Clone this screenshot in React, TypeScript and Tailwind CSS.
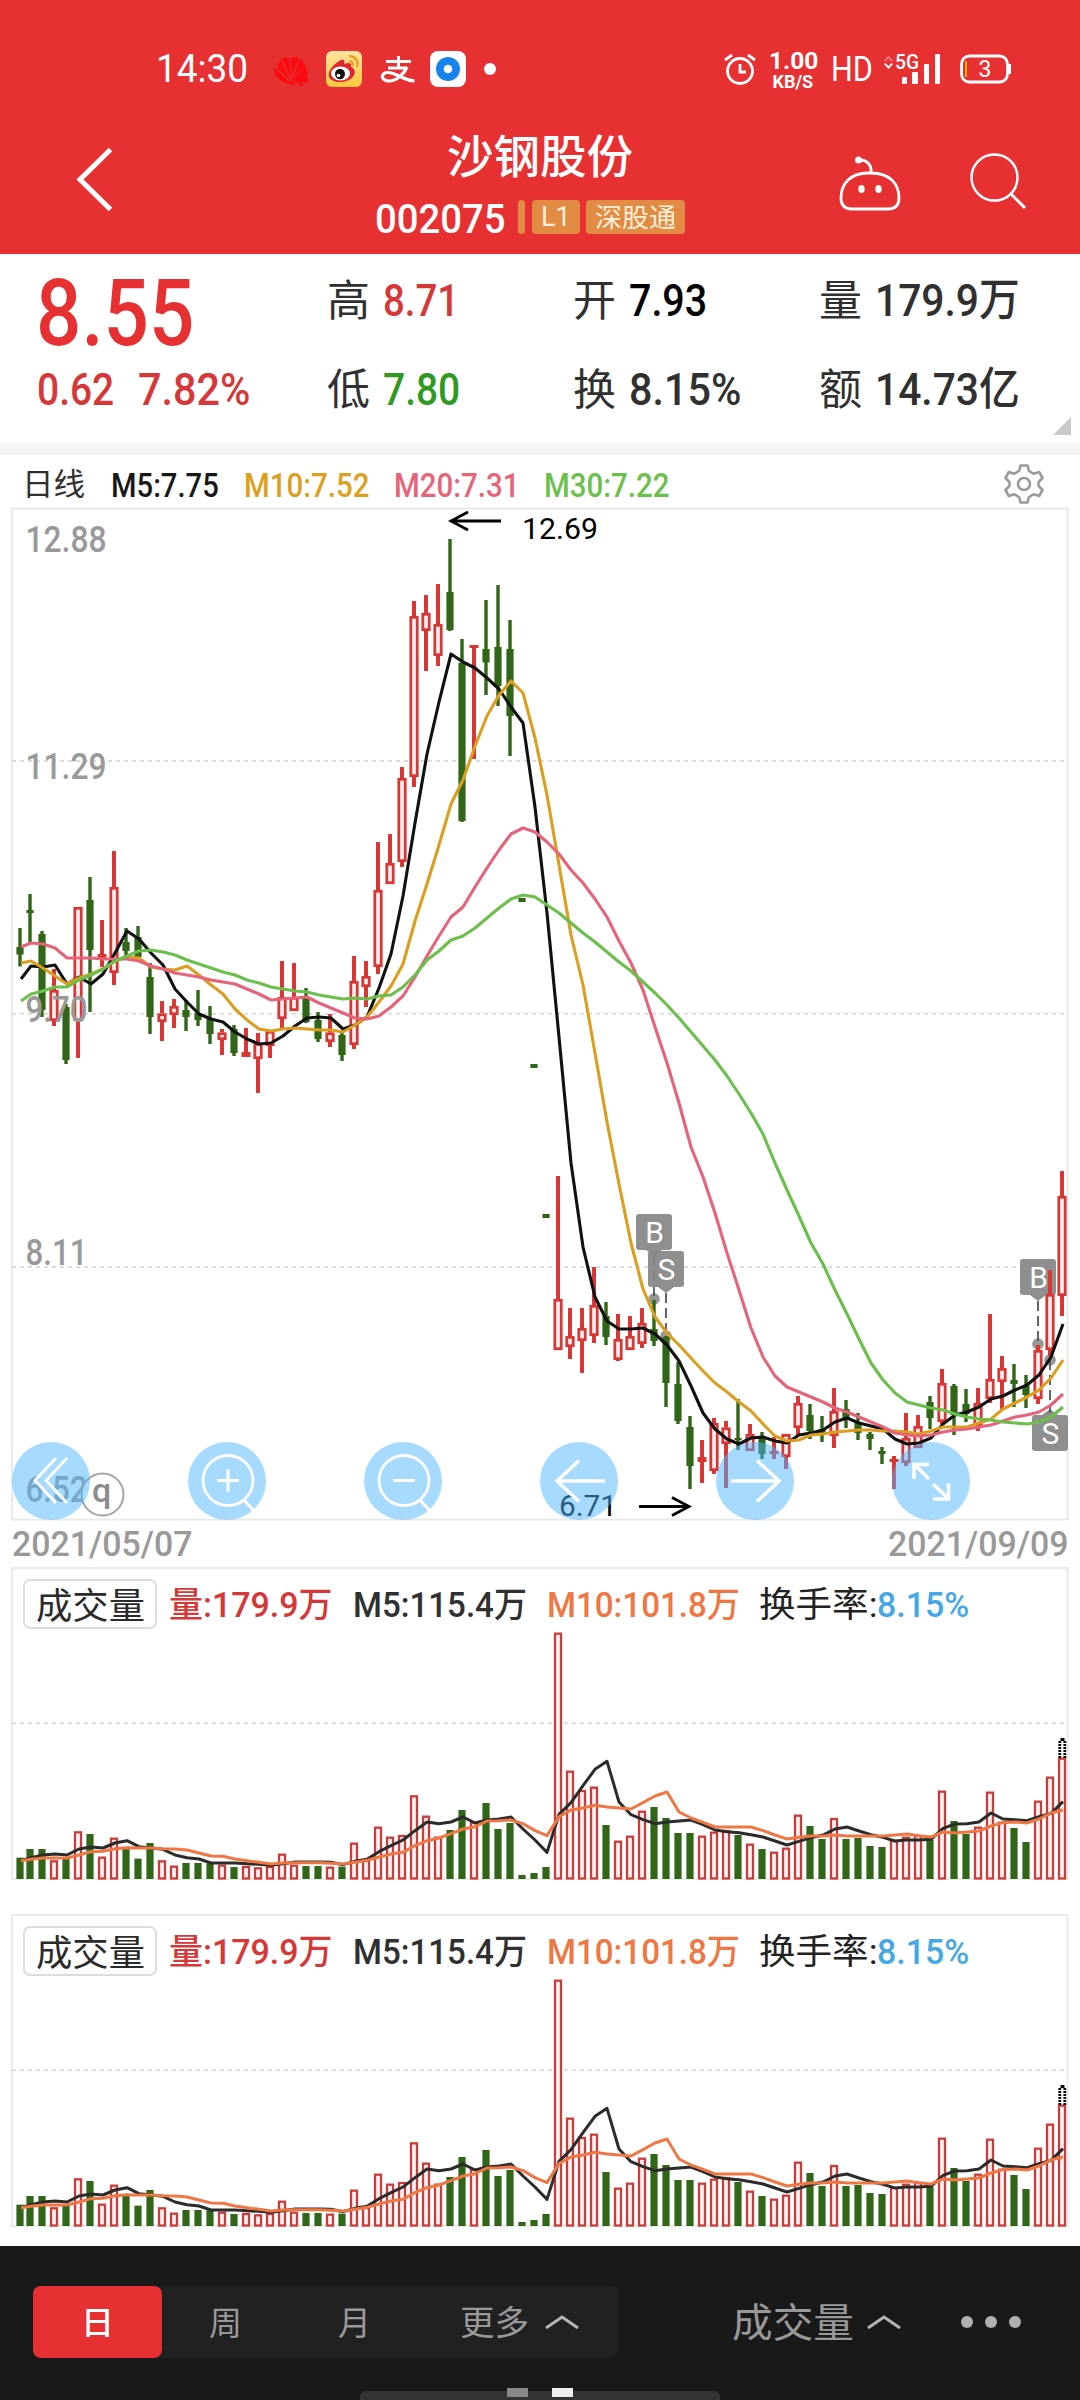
import { useLayoutEffect, useRef, useState } from "react";
import type { ReactNode } from "react";

/** A single line of text condensed or widened to fill exactly `w` pixels. */
function Fit({ w, className = "", children }: { w: number; className?: string; children: ReactNode }) {
  const ref = useRef<HTMLSpanElement>(null);
  const [scale, setScale] = useState(1);
  useLayoutEffect(() => {
    if (ref.current) setScale(w / ref.current.offsetWidth);
  }, [w]);
  return (
    <div className={`shrink-0 whitespace-nowrap leading-none ${className}`} style={{ width: w }}>
      <span ref={ref} className="inline-block origin-left leading-none" style={{ transform: `scaleX(${scale})` }}>
        {children}
      </span>
    </div>
  );
}

type Bar = [number, number, number, number, number]; // up?, high, body top, body bottom, low

const CANDLES: Bar[] = [
  [0, 928, 947, 954.5, 966.5], [0, 894, 910, 913, 942], [0, 931, 934, 1010, 1017], [1, 969, 990, 1021, 1026],
  [0, 1004, 1007, 1060, 1064], [1, 907, 907, 1021, 1058], [0, 877, 900, 950, 1012], [1, 920, 954, 959, 967],
  [1, 851, 887, 973, 985], [0, 928, 942, 951, 957], [0, 926, 937, 957, 958], [0, 963, 977, 1017, 1034],
  [1, 1001, 1013.5, 1022, 1041], [1, 999, 1006, 1015, 1028], [0, 1000, 1010, 1017, 1031], [0, 990, 1013, 1020, 1026],
  [0, 1006, 1019, 1034, 1044], [1, 1029, 1032.5, 1040, 1055], [0, 1025, 1029, 1053, 1056], [1, 1028, 1052, 1057, 1057],
  [1, 1033, 1043, 1059, 1093], [1, 1030, 1031, 1046, 1058], [1, 961, 997, 1019, 1028], [1, 963, 997, 1011, 1011],
  [0, 988, 997, 1022, 1023], [0, 1012, 1020, 1039, 1042], [1, 1014, 1032.5, 1042, 1047], [0, 1033, 1035, 1055, 1061],
  [1, 956, 981, 1045, 1049], [1, 961, 976, 987, 1007], [1, 842, 890, 967, 974], [1, 834, 863, 884, 884],
  [1, 767, 778, 862, 867], [1, 601, 616, 777, 787], [1, 595, 613, 631, 671], [1, 584, 624, 656, 666],
  [0, 539, 592, 630, 631], [0, 639, 663, 821, 822], [1, 645, 645, 648, 759], [0, 600, 649, 662.5, 695],
  [0, 585, 647, 686, 706], [0, 620, 649, 716, 756], [0, 898, 898, 902, 902], [0, 1064, 1064, 1068, 1068],
  [0, 1214, 1214, 1218, 1218], [1, 1176, 1299, 1350, 1350], [1, 1308, 1336, 1347, 1359], [1, 1308, 1328, 1341, 1373],
  [1, 1267, 1305, 1336, 1343], [0, 1302, 1316, 1337, 1345], [1, 1314, 1339, 1360, 1361], [1, 1316, 1336, 1350, 1350],
  [1, 1308, 1323, 1344, 1348], [0, 1300, 1329, 1341, 1346], [0, 1336, 1337, 1383, 1407], [0, 1362, 1384, 1421, 1424],
  [0, 1416, 1427, 1466, 1489], [1, 1440, 1457, 1462, 1483], [1, 1418, 1423, 1471, 1474], [1, 1421, 1427.5, 1444, 1488],
  [0, 1399, 1438, 1440, 1450], [1, 1424, 1434, 1451, 1451], [0, 1432, 1436, 1454, 1459], [1, 1437, 1451, 1454, 1459],
  [1, 1434, 1434, 1457, 1469], [1, 1396, 1403, 1428, 1435], [0, 1404, 1415, 1431, 1439], [0, 1416, 1429, 1433, 1442],
  [1, 1388, 1411, 1436, 1448], [0, 1400, 1409, 1418, 1428], [0, 1413, 1423, 1433, 1440], [0, 1432, 1434, 1439, 1450],
  [0, 1447, 1451, 1454, 1464], [1, 1456, 1459, 1462, 1489], [1, 1413, 1438, 1463, 1466], [1, 1415, 1426, 1448, 1448],
  [0, 1396, 1402, 1418, 1429], [1, 1369, 1383, 1422, 1424], [0, 1384, 1386, 1415, 1435], [0, 1389, 1404, 1414, 1422],
  [1, 1388, 1403, 1425, 1431], [1, 1314, 1379, 1399, 1403], [1, 1356, 1368, 1382, 1409], [0, 1364, 1380, 1384, 1407],
  [0, 1375, 1386, 1395, 1408], [1, 1345, 1350, 1399, 1404], [1, 1270, 1294, 1350, 1356], [1, 1171, 1196, 1296, 1316],
];

const MA5 = [979, 966, 967, 965, 984, 977, 984, 974, 953, 931, 939, 953, 965, 989, 1002, 1014, 1019, 1022, 1032, 1039, 1044, 1043, 1036, 1026, 1018, 1017, 1018, 1029, 1025, 1017, 988, 954, 896, 823, 754, 702, 654, 662, 668, 678, 689, 707, 723, 807, 913, 1037, 1163, 1247, 1297, 1321, 1329, 1329, 1328, 1334, 1345, 1361, 1386, 1413, 1429, 1439, 1444, 1438, 1437, 1441, 1443, 1435, 1433, 1430, 1422, 1418, 1423, 1426, 1429, 1439, 1444, 1443, 1438, 1424, 1415, 1412, 1407, 1399, 1396, 1390, 1385, 1375, 1357, 1324];
const MA10 = [963, 961, 968, 976, 984, 978, 974, 969, 961, 957, 958, 967, 969, 970, 966, 975, 985, 994, 1009, 1020, 1029, 1031, 1029, 1028, 1029, 1030, 1030, 1032, 1025, 1017, 1002, 986, 964, 921, 884, 845, 804, 780, 746, 716, 695, 681, 693, 738, 795, 865, 935, 985, 1053, 1122, 1184, 1243, 1289, 1317, 1333, 1345, 1358, 1371, 1383, 1392, 1402, 1411, 1424, 1436, 1441, 1440, 1435, 1434, 1432, 1431, 1430, 1430, 1431, 1431, 1432, 1434, 1431, 1427, 1427, 1427, 1423, 1419, 1409, 1403, 1397, 1390, 1378, 1360];
const MA20 = [947, 943, 944, 948, 958, 958, 958, 959, 959, 959, 961, 966, 969, 973, 975, 977, 980, 982, 984, 989, 994, 1000, 999, 998, 997, 1003, 1008, 1013, 1018, 1019, 1016, 1007, 996, 977, 956, 936, 917, 907, 887, 868, 850, 834, 828, 832, 842, 854, 870, 883, 899, 917, 941, 963, 990, 1027, 1063, 1103, 1147, 1177, 1213, 1253, 1290, 1328, 1357, 1376, 1387, 1392, 1397, 1402, 1408, 1412, 1417, 1422, 1427, 1433, 1435, 1436, 1435, 1432, 1430, 1429, 1427, 1425, 1421, 1417, 1415, 1412, 1405, 1394];
const MA30 = [1001, 994, 991, 987, 987, 980, 975, 969, 961, 956, 951, 950, 952, 955, 960, 964, 968, 972, 975, 980, 983, 987, 989, 991, 992, 995, 997, 999, 998, 999, 996, 995, 987, 975, 960, 951, 940, 936, 928, 918, 908, 899, 895, 897, 905, 913, 923, 933, 942, 952, 962, 971, 982, 993, 1005, 1018, 1032, 1046, 1060, 1076, 1094, 1113, 1134, 1163, 1190, 1216, 1243, 1264, 1290, 1314, 1339, 1363, 1380, 1393, 1402, 1405, 1408, 1410, 1414, 1417, 1419, 1420, 1422, 1423, 1424, 1422, 1417, 1407];

// Volume series, in thirds of a pixel below the panel's reference line.
const VOLUME = [713, 687, 687, 721, 712, 634, 642, 710, 653, 685, 716, 669, 721, 737, 729, 729, 730, 734, 741, 738, 742, 738, 701, 734, 738, 738, 740, 740, 668, 720, 620, 650, 645, 526, 587, 650, 630, 570, 605, 549, 627, 609, 765, 759, 741, 38, 452, 510, 500, 615, 662, 647, 572, 561, 594, 639, 639, 647, 635, 630, 645, 671, 687, 695, 683, 584, 618, 657, 594, 657, 654, 678, 681, 660, 650, 645, 660, 512, 603, 642, 620, 515, 605, 624, 666, 542, 470, 413];
const VOL5 = [722, 713, 705, 702, 705, 687, 681, 684, 669, 662, 680, 684, 688, 705, 713, 717, 729, 729, 729, 731, 733, 736, 731, 726, 726, 726, 727, 734, 724, 718, 695, 677, 660, 632, 606, 611, 606, 591, 609, 600, 597, 591, 627, 660, 697, 583, 548, 497, 448, 424, 546, 584, 599, 611, 606, 603, 600, 614, 630, 635, 638, 644, 651, 663, 675, 664, 653, 645, 627, 621, 633, 644, 652, 663, 660, 660, 658, 625, 612, 611, 606, 579, 597, 599, 602, 590, 580, 545];
const VOL10 = [722, 718, 714, 714, 714, 705, 695, 694, 686, 683, 684, 684, 686, 687, 690, 699, 708, 709, 717, 722, 727, 732, 729, 728, 728, 728, 730, 732, 727, 721, 711, 702, 697, 677, 662, 654, 641, 627, 620, 603, 602, 600, 611, 632, 647, 590, 570, 564, 556, 561, 564, 567, 548, 528, 516, 576, 594, 607, 621, 621, 621, 621, 632, 645, 657, 652, 648, 648, 645, 648, 648, 648, 648, 645, 642, 647, 651, 636, 639, 636, 633, 618, 608, 606, 609, 597, 579, 570];

const RED = "#d93636";
const GREEN = "#316518";

const barX = (i: number) => (i === 0 ? 20 : 18 + 12 * i);
const line = (ys: number[], map: (y: number) => number = (y) => y) =>
  ys.map((y, i) => `${barX(i) + 1},${map(y)}`).join(" ");

function Candle({ i, bar }: { i: number; bar: Bar }) {
  const [up, high, top, bottom, low] = bar;
  const x = barX(i);
  if (!up) {
    return (
      <g fill={GREEN}>
        <rect x={x - 1.7} y={high} width={3.4} height={Math.max(low - high, 1)} />
        <rect x={x - 3.6} y={top} width={7.2} height={bottom - top} />
      </g>
    );
  }
  const hollow = bottom - top > 6;
  return (
    <g>
      <rect x={x - 2} y={high} width={4} height={top - high} fill={RED} />
      <rect x={x - 2} y={bottom} width={4} height={low - bottom} fill={RED} />
      {hollow ? (
        <rect x={x - 3.2} y={top + 1.3} width={6.4} height={bottom - top - 2.6} fill="#fff3f3" stroke={RED} strokeWidth={2.8} />
      ) : (
        <rect x={x - 4.5} y={top} width={9} height={bottom - top} fill={RED} />
      )}
    </g>
  );
}

function Marker({ x, y, label, tip, dot }: { x: number; y: number; label: string; tip: "up" | "down"; dot: number }) {
  const down = tip === "down";
  return (
    <g>
      <circle cx={x} cy={dot} r={5.8} fill="#979797" />
      <rect x={x - 18} y={y} width={36} height={36} rx={3} fill="#868686" fillOpacity={0.92} />
      <path d={down ? `M${x - 8} ${y + 36}h16l-8 6z` : `M${x - 8} ${y}h16l-8 -6z`} fill="#868686" fillOpacity={0.92} />
      <path d={down ? `M${x} ${y + 42}V${dot}` : `M${x} ${dot}V${y - 2}`} stroke="#555" strokeWidth={1.8} strokeDasharray="10 5" />
      <text x={x + 0.5} y={y + 28.5} textAnchor="middle" fontSize={30} fill="#fff">
        {label}
      </text>
    </g>
  );
}

const AXIS: [string, number, number][] = [
  ["12.88", 551.5, 81],
  ["11.29", 778.5, 81],
  ["9.70", 1022, 62],
  ["8.11", 1265, 62],
  ["6.52", 1502, 62],
];

function PriceChart() {
  return (
    <svg viewBox="11 507 1058 1014" className="block h-[1014px] w-[1058px]" fontFamily="Roboto, sans-serif">
      <rect x={12} y={508.5} width={1055.5} height={1011} fill="#fff" stroke="#eaeaea" strokeWidth={2} />
      {[761, 1013.7, 1267].map((y) => (
        <path key={y} d={`M12 ${y}H1067`} stroke="#dcdcdc" strokeWidth={2} strokeDasharray="4 4" />
      ))}
      <Marker x={654} y={1214} label="B" tip="down" dot={1299} />
      <Marker x={666} y={1251} label="S" tip="down" dot={1336} />
      <Marker x={1038} y={1259} label="B" tip="down" dot={1344} />
      <Marker x={1050} y={1415} label="S" tip="up" dot={1360} />
      {CANDLES.map((bar, i) => (
        <Candle key={i} i={i} bar={bar} />
      ))}
      <g fill="none" strokeWidth={3.1} strokeLinejoin="round">
        <polyline points={line(MA5)} stroke="#111" />
        <polyline points={line(MA10)} stroke="#dc9e20" />
        <polyline points={line(MA20)} stroke="#e5647a" />
        <polyline points={line(MA30)} stroke="#6bbf4b" />
      </g>
      <g fill="#999" fontSize={36} fontWeight={500}>
        {AXIS.map(([t, y, w]) => (
          <text key={t} x={25.5} y={y} textLength={w} lengthAdjust="spacingAndGlyphs">
            {t}
          </text>
        ))}
      </g>
      <g fill="none" stroke="#000" strokeWidth={2.8}>
        <path d="M501 521H451M468 512L451 521L468 530" />
        <path d="M639 1506.5H689M672 1497.5L689 1506.5L672 1515.5" />
      </g>
      <text x={522} y={539} fontSize={30} textLength={76} lengthAdjust="spacingAndGlyphs">12.69</text>
      <text x={559} y={1515.5} fontSize={30} textLength={58} lengthAdjust="spacingAndGlyphs">6.71</text>
      <circle cx={102.5} cy={1494.5} r={21} fill="#fff" stroke="#a5a5a5" strokeWidth={2} />
      <text x={101.5} y={1502} textAnchor="middle" fontSize={34} fontWeight={500} fill="#8c8c8c">q</text>
      <g fill="#4db5ff" fillOpacity={0.5}>
        {[51, 227, 403, 579, 755, 931].map((x) => (
          <circle key={x} cx={x} cy={1481} r={39} />
        ))}
      </g>
      <g fill="none" stroke="#fff" strokeWidth={3.5}>
        <path d="M56 1458L35 1480.5L56 1503M67 1458L46 1480.5L67 1503" strokeWidth={2.8} />
        <circle cx={228} cy={1480.5} r={25} strokeWidth={2.8} />
        <path d="M244 1500L254 1511M217 1480.5H239M228 1469.5V1491.5" strokeWidth={3} />
        <circle cx={404} cy={1480.5} r={25} strokeWidth={2.8} />
        <path d="M420 1500L430 1511M393 1480.5H415" strokeWidth={3} />
        <path d="M605 1481H557M579 1460.5L557 1481L579 1501.5" />
        <path d="M731 1481H779M757 1460.5L779 1481L757 1501.5" />
        <path d="M929 1479L914 1464M929 1464.5H914V1479M933 1484L949 1499M933 1499H948.5V1483.5" />
      </g>
    </svg>
  );
}

function VolumePanel() {
  const base = 311;
  const toY = (v: number) => base - (777 - v) / 3;
  return (
    <section className="relative mx-[11px] h-[313px]">
      <svg viewBox="11 -1 1058 313" className="block h-[313px] w-[1058px]">
        <rect x={12} y={0} width={1055.5} height={base} fill="#fff" stroke="#eaeaea" strokeWidth={2} />
        <path d="M12 155.3H1067" stroke="#dcdcdc" strokeWidth={2} strokeDasharray="4 4" />
        {VOLUME.map((v, i) =>
          CANDLES[i][0] ? (
            <rect key={i} x={barX(i) - 3} y={toY(v) + 1} width={6} height={base - toY(v) - 1.5} fill="#fff3f3" stroke="#c93c3c" strokeWidth={2.3} />
          ) : (
            <rect key={i} x={barX(i) - 3.6} y={toY(v)} width={7.2} height={base - toY(v)} fill={GREEN} />
          ),
        )}
        <path d="M1059.800 190V173M1064.800 190V173" fill="none" stroke="#000" strokeWidth={2.800} strokeDasharray="2 1" />
        <path d="M1060.500 171.500H1064.500" stroke="#000" strokeWidth={3} />
        <g fill="none" strokeWidth={3} strokeLinejoin="round">
          <polyline points={line(VOL5, toY)} stroke="#2b2b2b" />
          <polyline points={line(VOL10, toY)} stroke="#ee7744" />
        </g>
      </svg>
      <div className="absolute left-3 top-3 flex h-[50px] items-start text-[35px] font-medium">
        <div className="flex h-[50px] w-[134px] items-start rounded-[7px] border-2 border-[#dddddd] bg-white pl-[11px] pt-2 font-normal text-[#2a2a2a]">
          <Fit w={109} className="text-[36px]">成交量</Fit>
        </div>
        <Fit w={164} className="ml-[12px] mt-[9px] text-[#d43838]">量:179.9万</Fit>
        <Fit w={174} className="ml-[20px] mt-[9px] text-[#303030]">M5:115.4万</Fit>
        <Fit w={193} className="ml-[20px] mt-[9px] text-[#ee7744]">M10:101.8万</Fit>
        <Fit w={118} className="ml-[19px] mt-[9px] font-normal text-[#222222]">换手率:</Fit>
        <Fit w={92} className="mt-[9px] text-[#45a8e5]">8.15%</Fit>
      </div>
    </section>
  );
}

function StatusBar() {
  return (
    <div className="flex h-[90px] items-start pl-[156px] pt-[50px]">
      <Fit w={92} className="text-[39px]">14:30</Fit>
      <svg viewBox="0 0 36 36" className="ml-[25px] mt-[4px] size-9" fill="#fb0a12">
        <path d="M16 30C8 29 1 22 1 14l4 1C5 8 8 4 13 3l4 2 4-2c5 0 9 3 11 9l2 4c1 3 0 6-1 9-2-4-5-7-6-10-2 4-7 7-7 12 0 2 2 3 4 2l-2 2z" />
        <path d="M17 28L4 15M18 27L9 6M19 25L17 5M20 22L26 5" stroke="#e73031" strokeWidth={1.6} />
        <path d="M28 15c-2 5-8 8-7 12 1 2 4 2 6 1l-1 4h4l-1-4c2 1 5 1 6-1 1-4-5-7-7-12z" />
      </svg>
      <svg viewBox="0 0 36 36" className="ml-[17px] mt-px h-9 w-9">
        <defs>
          <linearGradient id="sun" x1="0" y1="0" x2="0" y2="1">
            <stop offset="0" stopColor="#ffe3a0" />
            <stop offset="1" stopColor="#ffc93c" />
          </linearGradient>
        </defs>
        <rect width={36} height={36} rx={6} fill="url(#sun)" />
        <path d="M15 9c-8 4-14 12-12 17 3 7 21 7 25-2 2-4 0-7-3-8 1-4-2-5-7-3 1-3 0-5-3-4z" fill="#e3232b" />
        <ellipse cx={14.500} cy={22.500} rx={9.500} ry={7} fill="#fff" />
        <ellipse cx={14} cy={23} rx={5} ry={5.300} fill="#111" />
        <circle cx={12.500} cy={24.500} r={1.800} fill="#fff" />
        <path d="M23 5c6 0 10 5 8 11M23 10c3 0 4 2 4 5" fill="none" stroke="#ee9e25" strokeWidth={2.300} />
      </svg>
      <svg viewBox="0 0 36 30" className="ml-[18px] mt-[5px] h-[30px] w-9" fill="none" stroke="#fff">
        <path d="M6 6.500H31M18.500 1V12M8 13H27" strokeWidth={3} />
        <path d="M27 12C24 19 17 26 9 26C3 26 1 22 3.500 19C7 15.500 14 18.500 20 21.500C25 24 29 25.500 34.500 26" strokeWidth={3.200} />
      </svg>
      <svg viewBox="0 0 36 36" className="ml-[14px] mt-px h-9 w-9">
        <rect width={36} height={36} rx={8} fill="#fff" />
        <circle cx={18} cy={18} r={12} fill="#1684ec" />
        <circle cx={18} cy={18} r={4.300} fill="#fff" />
      </svg>
      <div className="ml-[18px] mt-[13px] size-3 rounded-full bg-white" />
      <svg viewBox="0 0 34 36" className="ml-[227px] mt-[2px] h-9 w-[34px]" fill="none" stroke="#fff" strokeWidth={2.800}>
        <circle cx={17} cy={19} r={12.500} />
        <path d="M17 12v8h6M2 8l7-5M32 8l-7-5" />
      </svg>
      <div className="ml-[12px] flex w-[48px] flex-col items-center">
        <Fit w={49} className="text-[23px] font-bold">1.00</Fit>
        <Fit w={41} className="text-[18px] font-bold">KB/S</Fit>
      </div>
      <Fit w={42} className="ml-[14px] mt-[2px] text-[35px]">HD</Fit>
      <svg viewBox="0 0 60 36" className="ml-[10px] mt-px h-9 w-[60px]" fill="#fff">
        <path d="M1 9.500l4.500-5 4.500 5-1.500 1-3-3-3 3z" opacity={0.35} />
        <path d="M1 13l4.500 5 4.500-5-1.500-1-3 3-3-3z" />
        <text x={12} y={17.500} fontSize={20} fontWeight={500} textLength={24} lengthAdjust="spacingAndGlyphs" fontFamily="Roboto, sans-serif">5G</text>
        <rect x={19} y={26} width={5} height={7} rx={1} />
        <rect x={29} y={21} width={6} height={12} rx={1} />
        <rect x={41} y={13} width={5} height={20} rx={1} />
        <rect x={52} y={3} width={5} height={30} rx={1} />
      </svg>
      <svg viewBox="0 0 52 32" className="ml-[17px] mt-[3px] h-8 w-[52px]" fill="none">
        <rect x={1.500} y={3} width={46} height={26} rx={8} stroke="#fff" strokeWidth={2.800} />
        <path d="M49.500 11v10" stroke="#fff" strokeWidth={3} />
        <path d="M6 8v16" stroke="#ffb400" strokeWidth={2} />
        <text x={25} y={24} textAnchor="middle" fontSize={23} fill="#fff" fontFamily="Roboto, sans-serif">3</text>
      </svg>
    </div>
  );
}

function Header() {
  return (
    <header className="h-[254px] bg-[#e73031] text-white">
      <StatusBar />
      <div className="flex h-[164px] items-start">
        <svg viewBox="0 0 40 70" className="ml-[75px] mt-[55px] h-[70px] w-10" fill="none" stroke="#fff" strokeWidth={5}>
          <path d="M35.500 4.500L5 34.500L35.500 64.500" />
        </svg>
        <div className="ml-[261px] mt-[44px] w-[310px]">
          <Fit w={186} className="ml-[71px] text-[46px] font-medium">沙钢股份</Fit>
          <div className="mt-[20px] flex h-[34px] items-start">
            <Fit w={131} className="-mt-[2px] -ml-px text-[41.500px] font-medium">002075</Fit>
            <div className="ml-[12px] h-[34px] w-[7px] rounded-sm bg-[#e28b45]" />
            <div className="ml-[7px] h-[34px] w-12 rounded-sm bg-[#e28b45] pl-[9px] pt-1 text-[#fff0d8]">
              <Fit w={30} className="text-[27px]">L1</Fit>
            </div>
            <div className="ml-[6px] h-[34px] w-[99px] rounded-sm bg-[#e28b45] pl-[9px] pt-[5px] text-[#fff0d8]">
              <Fit w={81} className="text-[26px]">深股通</Fit>
            </div>
          </div>
        </div>
        <svg viewBox="838 154 64 60" className="ml-[152px] mt-[64px] h-[60px] w-16" fill="none" stroke="#fff" strokeWidth={2.800}>
          <path d="M871 173H868C850 173 841 184 841 198C841 206 845 209 852 209H888C895 209 899 206 899 198C899 184 890 173 871 173C872 165 867 160 860 160" />
          <circle cx={858.500} cy={160} r={3.500} fill="#fff" stroke="none" />
          <ellipse cx={861.500} cy={189} rx={3.200} ry={4} fill="#fff" stroke="none" />
          <ellipse cx={878.500} cy={189} rx={3.200} ry={4} fill="#fff" stroke="none" />
        </svg>
        <svg viewBox="968 152 60 60" className="ml-[66px] mt-[62px] h-[60px] w-[60px]" fill="none" stroke="#fff" strokeWidth={2.500}>
          <circle cx={994.500} cy={177.500} r={23} />
          <path d="M1011 194L1025 208" strokeWidth={3} />
        </svg>
      </div>
    </header>
  );
}

function Stat({ label, value, w, className }: { label: string; value: string; w: number; className: string }) {
  return (
    <div className="flex h-[46px] items-start">
      <Fit w={43} className="mt-[2px] text-[43px] text-[#303030]">{label}</Fit>
      <Fit w={w} className={`ml-[13px] text-[45px] font-medium ${className}`}>{value}</Fit>
    </div>
  );
}

function Quote() {
  return (
    <section className="relative flex h-[189px] items-start bg-white">
      <div className="ml-[36px] mt-[14px] w-[291px] text-[#e73031]">
        <Fit w={158} className="text-[92px] font-medium">8.55</Fit>
        <div className="mt-[7px] flex items-start pl-px text-[45px] font-medium text-[#d63839]">
          <Fit w={77}>0.62</Fit>
          <Fit w={112} className="ml-[24px]">7.82%</Fit>
        </div>
      </div>
      <div className="mt-6 grid grid-cols-[246px_246px_210px] gap-y-[43px]">
        <Stat label="高" value="8.71" w={76} className="text-[#d63839]" />
        <Stat label="开" value="7.93" w={78} className="text-black" />
        <Stat label="量" value="179.9万" w={145} className="text-[#303030]" />
        <Stat label="低" value="7.80" w={77} className="text-[#2f9922]" />
        <Stat label="换" value="8.15%" w={112} className="text-[#303030]" />
        <Stat label="额" value="14.73亿" w={145} className="text-[#303030]" />
      </div>
      <svg viewBox="0 0 18 18" className="absolute bottom-2 right-[9px] size-[18px]">
        <path d="M18 0V18H0z" fill="#cacaca" />
      </svg>
    </section>
  );
}

function Averages() {
  return (
    <section className="flex h-[52px] items-start bg-white text-[33px] font-medium">
      <Fit w={63} className="ml-[22px] mt-[14px] text-[31px] font-normal text-[#303030]">日线</Fit>
      <Fit w={108} className="ml-[26px] mt-[14px] text-[#181818]">M5:7.75</Fit>
      <Fit w={126} className="ml-[25px] mt-[14px] text-[#dc9f20]">M10:7.52</Fit>
      <Fit w={126} className="ml-[24px] mt-[14px] text-[#e5647a]">M20:7.31</Fit>
      <Fit w={126} className="ml-[24px] mt-[14px] text-[#6bbf4b]">M30:7.22</Fit>
      <svg viewBox="0 0 42 42" className="ml-[333px] mt-[8px] size-[42px]" fill="none" stroke="#999" strokeWidth={2.600} strokeLinejoin="round">
        <path d="M17.500 2.500h7l1.500 5.500 4.500 2.700 5.700-1.700 3.300 6-4 4.200v3.600l4 4.200-3.300 6-5.700-1.700-4.500 2.700-1.500 5.500h-7l-1.500-5.500-4.500-2.700-5.700 1.700-3.300-6 4-4.200v-3.600l-4-4.200 3.300-6 5.700 1.700 4.500-2.700z" />
        <circle cx={21} cy={21} r={6} />
      </svg>
    </section>
  );
}

function Chevron({ className }: { className: string }) {
  return (
    <svg viewBox="0 0 36 16" className={`h-4 w-9 ${className}`} fill="none" stroke="#b5b5b5" strokeWidth={3}>
      <path d="M2 14L18 3L34 14" />
    </svg>
  );
}

function Footer() {
  return (
    <footer className="relative flex h-[154px] items-start bg-[#191919] text-[#999999]">
      <div className="ml-[33px] mt-10 flex h-[72px] w-[586px] items-start rounded-lg bg-[#212121]">
        <div className="flex h-[72px] w-[129px] items-start justify-center rounded-lg bg-[#e73031] pt-[21px] text-white">
          <Fit w={33} className="text-[32px] font-medium">日</Fit>
        </div>
        <Fit w={33} className="ml-[47px] mt-[21px] text-[33px]">周</Fit>
        <Fit w={33} className="ml-[96px] mt-[21px] text-[33px]">月</Fit>
        <Fit w={69} className="ml-[89px] mt-[20px] text-[34px]">更多</Fit>
        <Chevron className="ml-[15px] mt-7" />
      </div>
      <Fit w={122} className="ml-[113px] mt-[58px] text-[40px]">成交量</Fit>
      <Chevron className="ml-[12px] mt-[68px]" />
      <div className="ml-[59px] mt-[70px] flex gap-3">
        <span className="size-3 rounded-full bg-[#b0b0b0]" />
        <span className="size-3 rounded-full bg-[#b0b0b0]" />
        <span className="size-3 rounded-full bg-[#b0b0b0]" />
      </div>
      <div className="absolute bottom-0 left-[360px] h-[9px] w-[360px] rounded-t-md bg-[#333333]" />
      <div className="absolute bottom-[3px] left-[507px] flex gap-6">
        <span className="h-[9px] w-[21px] bg-[#888888]" />
        <span className="h-[9px] w-[21px] bg-[#eeeeee]" />
      </div>
    </footer>
  );
}

export default function App() {
  return (
    <div className="h-[2400px] w-[1080px] overflow-hidden bg-white font-[Roboto,'Noto_Sans_CJK_SC',sans-serif]">
      <Header />
      <Quote />
      <div className="h-3 bg-[#f4f4f4]" />
      <Averages />
      <main>
        <div className="mx-[11px] h-[1014px]">
          <PriceChart />
        </div>
        <div className="flex h-[46px] items-start justify-between px-3 pt-[6px] text-[35px] font-medium text-[#999999]">
          <Fit w={180}>2021/05/07</Fit>
          <Fit w={180}>2021/09/09</Fit>
        </div>
        <VolumePanel />
        <div className="h-[34px]" />
        <VolumePanel />
      </main>
      <div className="h-[19px]" />
      <Footer />
    </div>
  );
}
